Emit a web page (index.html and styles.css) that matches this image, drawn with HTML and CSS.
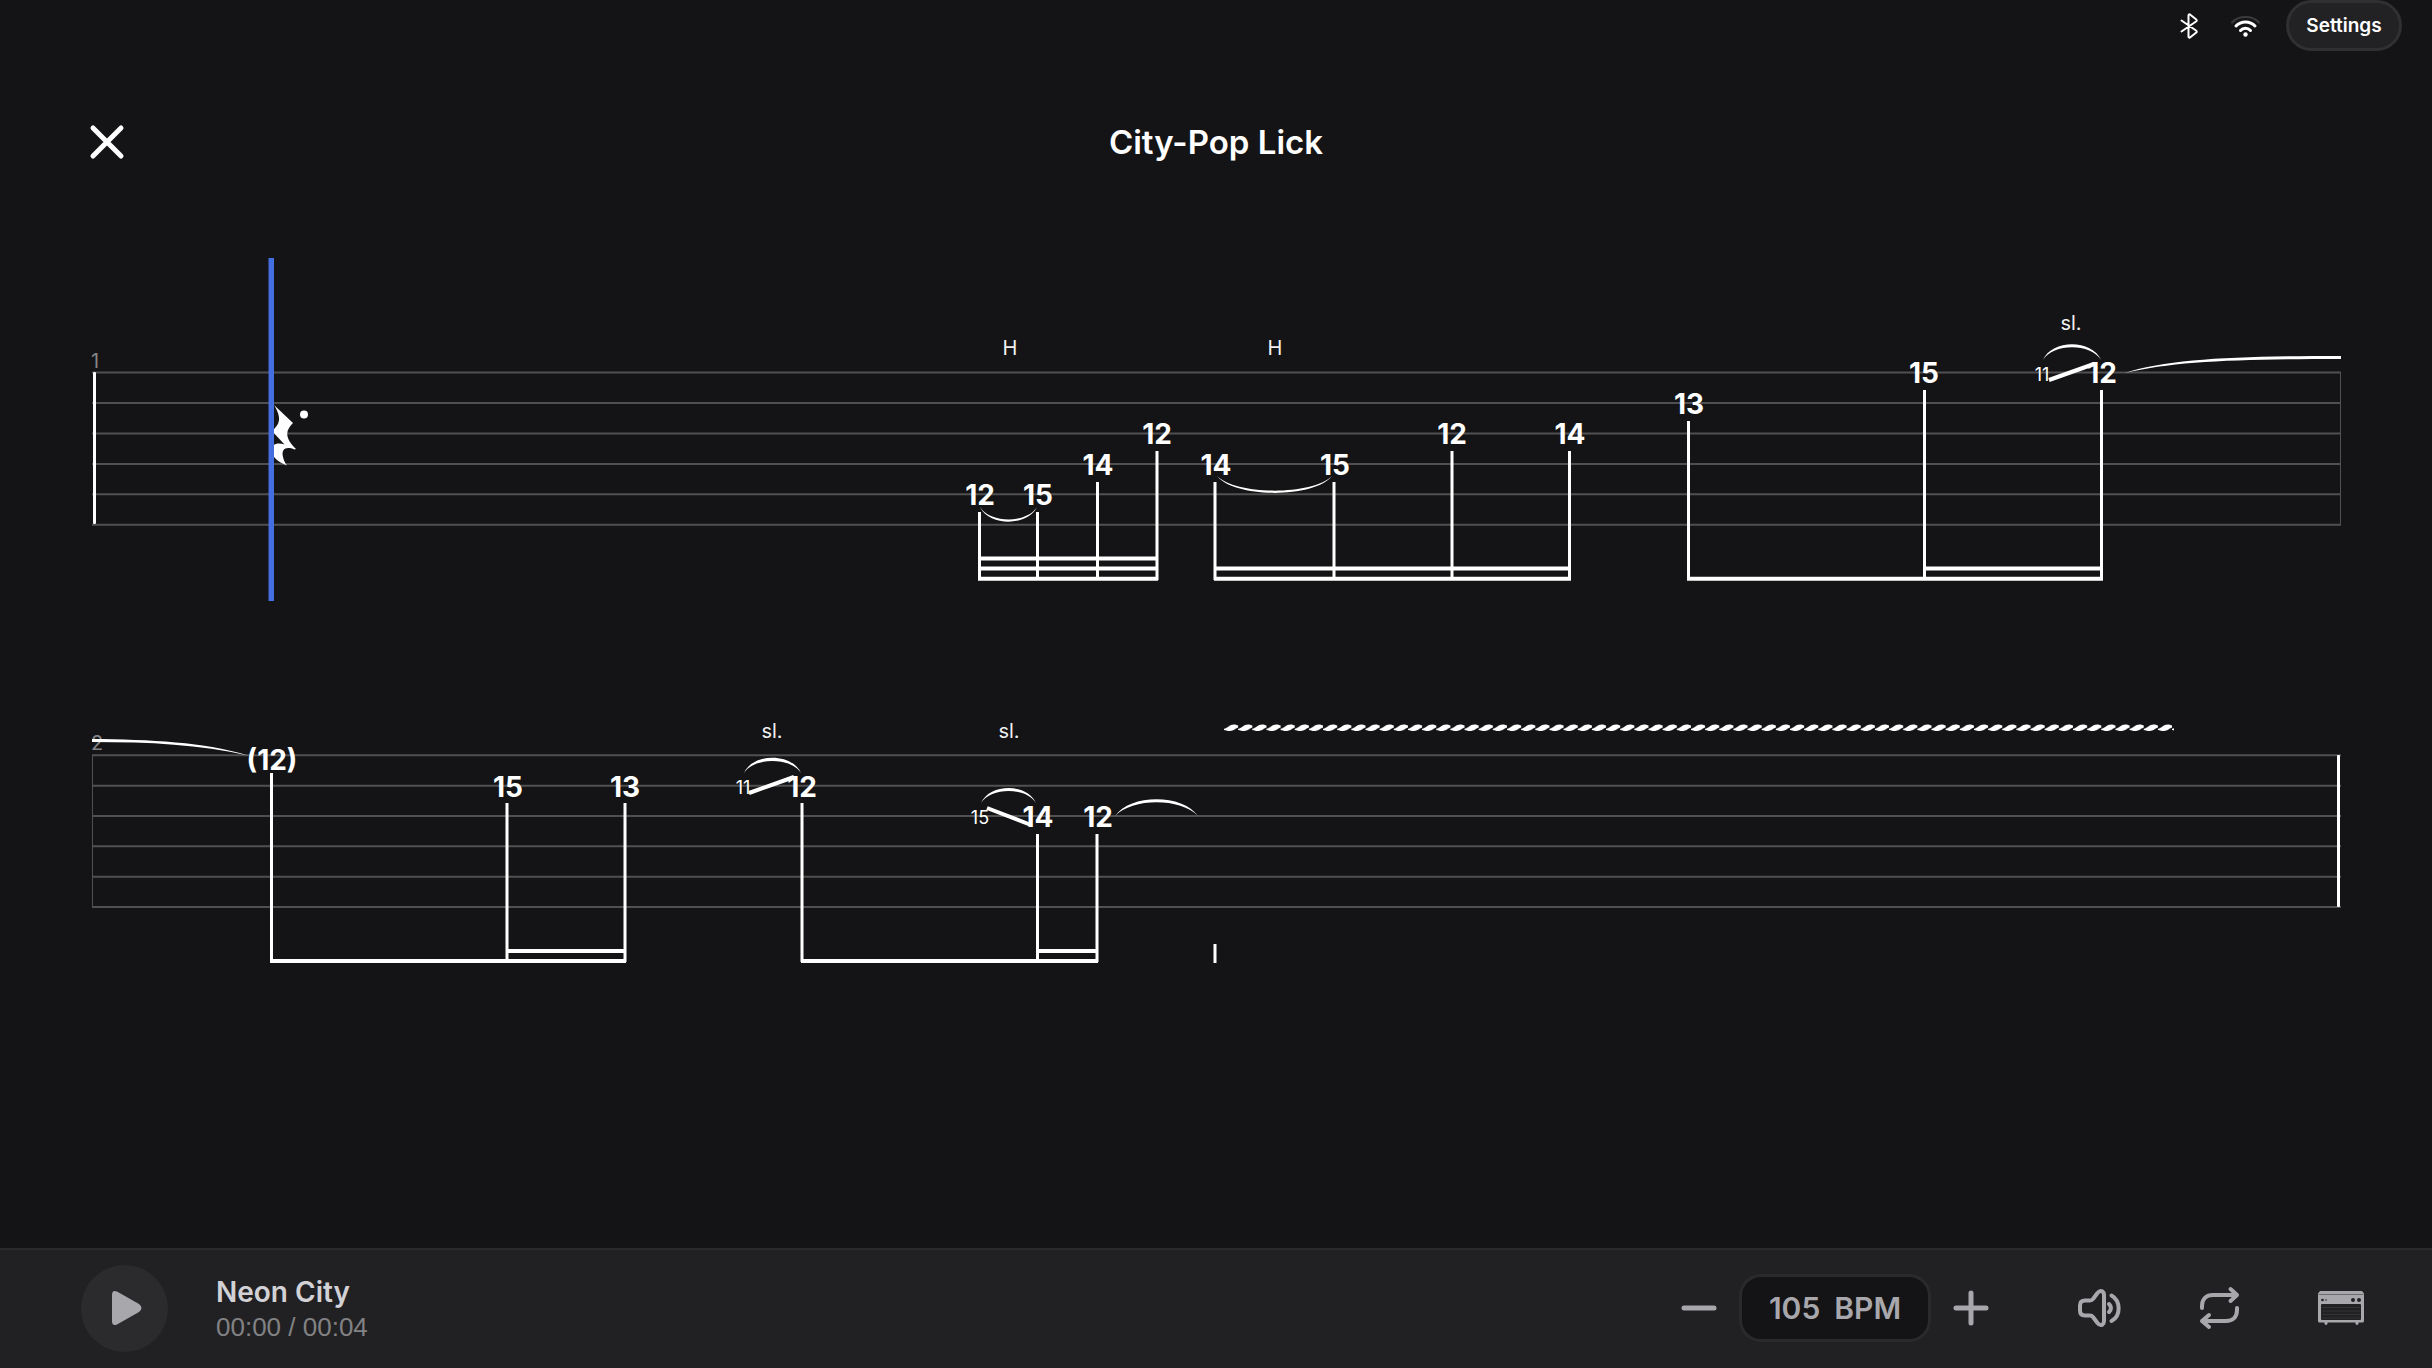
FILE: index.html
```html
<!DOCTYPE html>
<html lang="en">
<head>
    <meta charset="UTF-8">
    <meta name="viewport" content="width=device-width, initial-scale=1.0">
    <title>City-Pop Lick</title>
    <link rel="stylesheet" href="styles.css">
</head>
<body>
    <div class="status-bar">
        <svg class="status-icon" viewBox="0 0 32 32" role="img" aria-label="Bluetooth">
            <path d="M7.500 10.500 L22 20.500 Q23.500 21.600 22 22.800 L16 27.500 Q14.500 28 14.500 26.500 V5.500 Q14.500 4 16 4.500 L22 9.200 Q23.500 10.400 22 11.500 L7.500 21.500" />
        </svg>
        <svg class="status-icon wifi" viewBox="0 0 32 32" role="img" aria-label="Wi-Fi">
            <path class="dim" d="M2 12.500 C8.500 5 22.500 5 29 12.500" />
            <path d="M6 16 C11 10.500 20 10.500 25 16" />
            <path d="M10.500 20.500 C13 17.500 18 17.500 20.500 20.500" />
            <circle class="solid" cx="15.500" cy="24.500" r="2.200" />
        </svg>
        <button class="settings">Settings</button>
    </div>

    <header class="header">
        <button class="icon-button close" aria-label="Close">
            <svg viewBox="0 0 48 48"><path d="M10 10 L38 38 M38 10 L10 38" /></svg>
        </button>
        <h1 class="title">City-Pop Lick</h1>
    </header>

    <main class="sheet">
        <!-- measure 1 -->
        <svg class="measure" viewBox="92 250 2249 360">
            <path class="staff" d="M92 372.500 H2341 M92 403 H2341 M92 433.500 H2341 M92 464 H2341 M92 494.300 H2341 M92 524.700 H2341" />
            <path class="barline-thin" d="M2340.500 372 V525" />
            <rect class="ink" x="93" y="372" width="3" height="152" rx="1" />
            <text class="measure-number" x="91" y="368">1</text>

            <path class="ink" d="M274 405 L293 423 C285 431 285 438 296 449 L294.500 449.500 C286 446 281 449 283 457 C284 461 285 463 287 465.500 C278 462 271 456 271 450 C271 444 278 442 284.500 444.500 L272 431 C280 424 282 418 274 405 Z" />
            <circle class="ink" cx="304" cy="414.500" r="4" />

            <path class="stem" d="M979.500 512 V580 M1037.500 512 V580 M1097.500 482 V580 M1157 451 V580" />
            <path class="stem" d="M1215 482 V580 M1334 482 V580 M1452 451 V580 M1569.500 451 V580" />
            <path class="stem" d="M1688.500 421 V580 M1924.500 390 V580 M2101.500 390 V580" />
            <path class="beam" d="M978 558.500 H1158 M978 568.500 H1158 M978 578.700 H1158" />
            <path class="beam" d="M1214 568.500 H1571 M1214 578.700 H1571" />
            <path class="beam" d="M1924 568.500 H2103 M1687 578.700 H2103" />

            <path class="ink" d="M980 507 C989 526.500 1028 526.500 1037 507 C1027 523.500 990 523.500 980 507 Z" />
            <path class="ink" d="M1217 476 C1235 498.500 1314 498.500 1332 476 C1312 495.500 1237 495.500 1217 476 Z" />
            <path class="ink" d="M2043 360 C2052 339 2092 339 2101 360 C2091 343 2053 343 2043 360 Z" />
            <path class="ink" d="M2125 373 C2170 358.500 2240 356 2341 356 V359 C2240 359 2175 361 2125 373 Z" />
            <path class="slide" d="M2049 380 L2094 364" />

            <text class="effect" x="1010" y="355">H</text>
            <text class="effect" x="1275" y="355">H</text>
            <text class="effect" x="2071" y="330">sl.</text>
            <text class="grace" x="2042" y="381">11</text>

            <text class="fret" x="980" y="505">12</text>
            <text class="fret" x="1038" y="505">15</text>
            <text class="fret" x="1098" y="475">14</text>
            <text class="fret" x="1157" y="444">12</text>
            <text class="fret" x="1216" y="475">14</text>
            <text class="fret" x="1335" y="475">15</text>
            <text class="fret" x="1452" y="444">12</text>
            <text class="fret" x="1570" y="444">14</text>
            <text class="fret" x="1689" y="414">13</text>
            <text class="fret" x="1924" y="383">15</text>
            <text class="fret" x="2102" y="383">12</text>

            <rect class="playhead" x="268.500" y="258" width="5.500" height="343" />
        </svg>

        <!-- measure 2 -->
        <svg class="measure" viewBox="92 700 2249 280">
            <defs>
                <pattern id="vibrato" x="1224" y="724" width="14.150" height="8" patternUnits="userSpaceOnUse">
                    <path class="ink" d="M0 4.800 C4 4.300 5 0.600 10 0.600 C12 0.600 13 1.300 14.150 1.600 V3.500 C11 4.500 10 7 5 7 C3 7 2 6 0 5.900 Z" />
                </pattern>
            </defs>

            <path class="staff" d="M92 755.300 H2341 M92 785.700 H2341 M92 816 H2341 M92 846.300 H2341 M92 876.700 H2341 M92 907 H2341" />
            <path class="barline-thin" d="M92.500 755 V908" />
            <rect class="ink" x="2337" y="755" width="3" height="152" rx="1" />
            <text class="measure-number" x="91" y="750">2</text>

            <path class="stem" d="M271.500 773 V962 M507 803 V962 M625 803 V962" />
            <path class="stem" d="M802 803 V962 M1037.500 834 V962 M1097 834 V962" />
            <path class="stem" d="M1215 944 V963" />
            <path class="beam" d="M270 961 H626 M507 951 H626" />
            <path class="beam" d="M801 961 H1098 M1037 951 H1098" />

            <path class="ink" d="M92 739 C150 739.500 205 742 248 755.500 C200 744.500 150 742 92 742 Z" />
            <path class="ink" d="M744 773 C753 752.500 792 752.500 801 773 C791 757 754 757 744 773 Z" />
            <path class="ink" d="M981 803 C990 783 1027 783 1036 803 C1026 787 991 787 981 803 Z" />
            <path class="ink" d="M1115 816 C1130 793.500 1183 793.500 1198 816 C1181 797.500 1132 797.500 1115 816 Z" />
            <path class="slide" d="M749 793 L794 777 M987 808 L1031 825" />
            <rect x="1224" y="724" width="950" height="8" fill="url(#vibrato)" />

            <text class="effect" x="772" y="738">sl.</text>
            <text class="effect" x="1009" y="738">sl.</text>
            <text class="grace" x="743" y="794">11</text>
            <text class="grace" x="980" y="824">15</text>

            <text class="fret" x="272" y="770">(12)</text>
            <text class="fret" x="508" y="797">15</text>
            <text class="fret" x="625" y="797">13</text>
            <text class="fret" x="802" y="797">12</text>
            <text class="fret" x="1038" y="827">14</text>
            <text class="fret" x="1098" y="827">12</text>
        </svg>
    </main>

    <footer class="player">
        <button class="play" aria-label="Play">
            <svg viewBox="0 0 48 48"><path d="M11 11 Q11 5.500 16 7.500 L38 20 Q43 24 38 28 L16 40.500 Q11 42.500 11 37 Z" /></svg>
        </button>
        <div class="track">
            <p class="track-name">Neon City</p>
            <p class="track-time">00:00 / 00:04</p>
        </div>
        <div class="tempo">
            <button class="icon-button" aria-label="Slower">
                <svg viewBox="0 0 48 48"><path d="M9 24 H39" /></svg>
            </button>
            <div class="bpm"><span>105</span><span>BPM</span></div>
            <button class="icon-button" aria-label="Faster">
                <svg viewBox="0 0 48 48"><path d="M9 24 H39 M24 9 V39" /></svg>
            </button>
        </div>
        <div class="tools">
            <button class="icon-button" aria-label="Volume">
                <svg class="fine" viewBox="0 0 48 48">
                    <path d="M10 16.500 H15 Q17 16.500 18 15 L22.500 9 Q25 6 27.500 7.500 Q29 8.500 29 11 V37 Q29 39.500 27.500 40.500 Q25 42 22.500 39 L18 33 Q17 31.500 15 31.500 H10 Q5 31.500 5 26.500 V21.500 Q5 16.500 10 16.500 Z" />
                    <path d="M34 20 Q38 24 34 28" />
                    <path d="M36.500 11.500 C46 17 46 32 36.500 37" />
                </svg>
            </button>
            <button class="icon-button" aria-label="Loop">
                <svg class="fine" viewBox="0 0 48 48">
                    <path d="M6 24 V22 C6 15 10 11 17 11 H41 M34.500 5 L41 11 L34.500 17" />
                    <path d="M41 24 V26 C41 33 37 37 30 37 H6 M13 31 L6 37 L13 43" />
                </svg>
            </button>
            <button class="icon-button" aria-label="Amp">
                <svg class="amp" viewBox="0 0 48 48">
                    <path d="M3 7 H45 L47 9.500 V37 Q47 38.500 45.500 38.500 H41.500 V40 Q40 42 38.500 40 V38.500 H10.500 V40 Q9 42 7.500 40 V38.500 H2.500 Q1 38.500 1 37 V9.500 Z" />
                    <rect class="cut" x="4" y="20" width="40" height="16" rx="1" />
                    <path class="mesh" d="M5 23.500 H43 M5 27 H43 M5 30.500 H43 M5 34 H43" />
                    <path class="seam" d="M2 10.500 H46" />
                    <circle class="cut" cx="5.500" cy="16" r="1.300" />
                    <circle class="cut" cx="9" cy="16" r="0.800" />
                    <circle class="cut" cx="36" cy="16" r="2" />
                    <circle class="cut" cx="42" cy="16" r="2" />
                </svg>
            </button>
        </div>
    </footer>
</body>
</html>
```
FILE: styles.css
```css
* {
    margin: 0;
    padding: 0;
    box-sizing: border-box;
}

body {
    display: flex;
    flex-direction: column;
    min-height: 100vh;
    background-color: #141416;
    color: white;
    font-family: Inter, "Liberation Sans", sans-serif;
}

button {
    border: none;
    background: none;
    color: inherit;
    font: inherit;
    cursor: pointer;
}

svg {
    display: block;
}

/* status bar */
.status-bar {
    display: flex;
    justify-content: flex-end;
    align-items: center;
    gap: 24px;
    padding-right: 30px;
}

.status-icon {
    width: 32px;
    height: 32px;
    fill: none;
    stroke: white;
    stroke-width: 2px;
    stroke-linecap: round;
    stroke-linejoin: round;
}

.wifi {
    stroke-width: 3px;
}

.status-icon .dim {
    stroke: #3a3a3c;
    stroke-width: 2px;
}

.status-icon .solid {
    fill: white;
    stroke: none;
}

.settings {
    width: 116px;
    height: 51px;
    border: 3px solid #303032;
    border-radius: 26px;
    background-color: #222224;
    font-size: 19px;
    font-weight: 600;
}

/* header */
.header {
    display: grid;
    grid-template-columns: 1fr auto 1fr;
    align-items: center;
    height: 80px;
    margin-top: 51px;
    padding: 0 83px;
}

.title {
    font-size: 33px;
    font-weight: 600;
    line-height: 40px;
}

.icon-button,
.icon-button svg {
    width: 48px;
    height: 48px;
}

.icon-button svg {
    fill: none;
    stroke: #a8a7ac;
    stroke-width: 5px;
    stroke-linecap: round;
    stroke-linejoin: round;
}

.close svg {
    stroke: white;
}

/* tablature */
.sheet {
    flex: 1;
    display: flex;
    flex-direction: column;
    gap: 90px;
    padding: 68px 91px 90px 92px;
}

.measure {
    width: 100%;
    height: auto;
    overflow: visible;
}

.staff {
    stroke: #505052;
    stroke-width: 2px;
}

.barline-thin {
    stroke: #505052;
    stroke-width: 1px;
}

.ink {
    fill: white;
}

.stem {
    stroke: white;
    stroke-width: 3px;
}

.beam {
    stroke: white;
    stroke-width: 4px;
}

.slide {
    stroke: white;
    stroke-width: 4px;
}

.playhead {
    fill: #446fe0;
}

.measure-number {
    fill: #858587;
    font-size: 20px;
}

.effect {
    fill: #f0f0f0;
    font-size: 20px;
    text-anchor: middle;
}

.grace {
    fill: white;
    font-size: 18px;
    text-anchor: middle;
}

.fret {
    fill: white;
    font-size: 28px;
    font-weight: bold;
    text-anchor: middle;
}

/* player */
.player {
    display: flex;
    align-items: center;
    height: 120px;
    padding: 0 67px 2px 81px;
    border-top: 2px solid #2a2a2c;
    background-color: #212123;
}

.play {
    display: flex;
    justify-content: center;
    align-items: center;
    width: 87px;
    height: 87px;
    border-radius: 50%;
    background-color: #2b2b2d;
}

.play svg {
    width: 48px;
    height: 48px;
    fill: #a8a7ac;
}

.track {
    flex: 1;
    margin-left: 48px;
    padding-top: 2px;
}

.track-name {
    color: #d2d1d6;
    font-size: 28px;
    font-weight: 600;
    line-height: 36px;
}

.track-time {
    color: #828284;
    font-family: "Liberation Sans", Arial, sans-serif;
    font-size: 26px;
    line-height: 34px;
}

.tempo {
    display: flex;
    align-items: center;
    gap: 16px;
    margin-right: 80px;
}

.bpm {
    display: flex;
    justify-content: center;
    align-items: center;
    gap: 14px;
    width: 192px;
    height: 68px;
    border: 3px solid #2a2a2c;
    border-radius: 22px;
    background-color: #141416;
    color: #a8a7ac;
    font-size: 30px;
    font-weight: 600;
}

.tools {
    display: flex;
    gap: 73px;
}

.icon-button .fine {
    stroke-width: 4px;
}

.icon-button .amp {
    fill: #a8a7ac;
    stroke: none;
}

.amp .cut {
    fill: #212123;
}

.amp .mesh {
    stroke: #333335;
    stroke-width: 1px;
}

.amp .seam {
    stroke: #6c6c70;
    stroke-width: 1px;
}
```
